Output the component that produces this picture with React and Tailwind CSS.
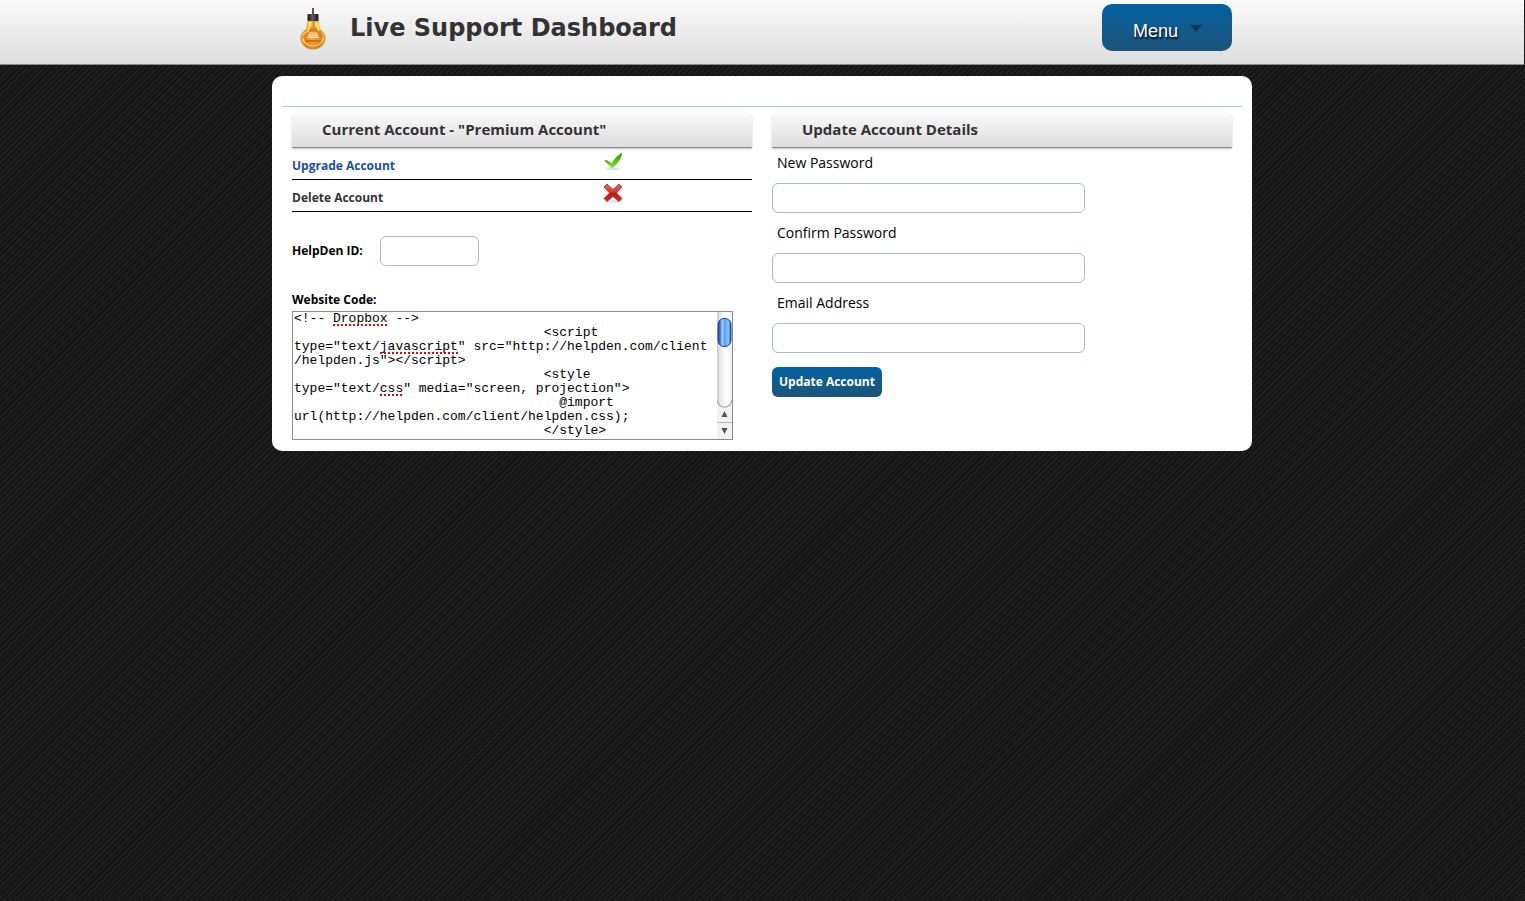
import React from 'react';

const code = [
  '<!-- Dropbox -->',
  ' '.repeat(32) + '<script',
  'type="text/javascript" src="http://helpden.com/client',
  '/helpden.js"></script>',
  ' '.repeat(32) + '<style',
  'type="text/css" media="screen, projection">',
  ' '.repeat(34) + '@import',
  'url(http://helpden.com/client/helpden.css);',
  ' '.repeat(32) + '</style>',
].join('\n');

function Bulb() {
  return (
    <svg width="32" height="48" viewBox="0 0 32 48" aria-hidden="true">
      <defs>
        <radialGradient id="glass" cx="50%" cy="66%" r="52%">
          <stop offset="0" stopColor="#f0a84a" />
          <stop offset="0.4" stopColor="#ea9430" />
          <stop offset="0.7" stopColor="#dd7f17" />
          <stop offset="1" stopColor="#f8cf6c" />
        </radialGradient>
        <linearGradient id="cap" x1="0" x2="1">
          <stop offset="0" stopColor="#191416" />
          <stop offset="0.45" stopColor="#66565a" />
          <stop offset="1" stopColor="#1c1618" />
        </linearGradient>
        <filter id="glow" x="-30%" y="-30%" width="160%" height="160%">
          <feGaussianBlur stdDeviation="1.2" />
        </filter>
        <filter id="soft" x="-20%" y="-20%" width="140%" height="140%">
          <feGaussianBlur stdDeviation="0.5" />
        </filter>
      </defs>
      <path d="M10 17h12l1 9c4 2 6 5 6 9 0 7-6 12-13 12S3 42 3 35c0-4 3-7 6-9z" fill="#f2d98c" opacity=".6" filter="url(#glow)" />
      <path d="M16 5v7" stroke="#5a5557" strokeWidth="2" />
      <path d="M11 18h10.500c0 4 0 7 1.500 9 3.500 2 5 4.500 5 8 0 6.500-5 11-12 11S4 41.500 4 35c0-3.500 2-6.500 5-8 1.500-2 2-5 2-9z" fill="url(#glass)" stroke="#a08a4c" strokeWidth=".8" />
      <g filter="url(#soft)">
        <path d="M12.500 18.500c0 5-1 8-2 9M20.500 18.500c0 5 .5 7 1.500 9" fill="none" stroke="#ffdd60" strokeWidth="2" />
        <path d="M6.500 32c1-3 3.500-3.500 5.500-4M26 35c-1 5-5 8-10 8S7 40 6 36" fill="none" stroke="#ffd060" strokeWidth="1.200" />
        <path d="M11.500 31h9.500v3H11z" fill="#f6c67c" />
        <path d="M10.500 34.500h11.500M12 30l8 0" fill="none" stroke="#ffedb4" strokeWidth="1.200" />
        <path d="M16.500 18v10" stroke="#d0852c" strokeWidth="2" />
        <path d="M8 38h16" stroke="#d07414" strokeWidth="2" />
      </g>
      <rect x="10.500" y="11" width="11" height="7" rx="1" fill="url(#cap)" />
    </svg>
  );
}

function Check() {
  return (
    <svg width="20" height="20" viewBox="0 0 20 20" aria-hidden="true">
      <defs>
        <linearGradient id="tick" x1="0" y1="0" x2="0" y2="1">
          <stop offset="0" stopColor="#3c9a12" />
          <stop offset="0.6" stopColor="#5cc40e" />
          <stop offset="1" stopColor="#a6e07c" />
        </linearGradient>
      </defs>
      <ellipse cx="10" cy="17" rx="7" ry="1" fill="#dcdcdc" />
      <path d="M1.200 8.800Q3 7.600 4.800 8.400L8.800 11.200Q12 5 18.500 1 19.500 1 19 2.200 18 8 10.500 15.500 9.200 17 8 15.500 4.500 12 1.200 8.800z" fill="url(#tick)" />
    </svg>
  );
}

function Cross() {
  return (
    <svg width="20" height="20" viewBox="0 0 20 20" aria-hidden="true">
      <defs>
        <linearGradient id="cross" x1="0" y1="0" x2="0" y2="1">
          <stop offset="0" stopColor="#e06a62" />
          <stop offset="0.45" stopColor="#cf3a34" />
          <stop offset="0.55" stopColor="#b31616" />
          <stop offset="1" stopColor="#dc2a24" />
        </linearGradient>
      </defs>
      <ellipse cx="10" cy="18.500" rx="8" ry="1" fill="#dedede" />
      <path d="M4 1l6 5.500L16 1l3 3-5.500 6 5.500 5.500-3 3-6-5-6 5-3-3L6.500 10 1 4z" fill="url(#cross)" stroke="#b02a26" strokeWidth=".8" strokeLinejoin="round" />
    </svg>
  );
}

function ScrollTrack() {
  return (
    <svg width="15" height="127" viewBox="0 0 15 127" aria-hidden="true" className="shrink-0">
      <defs>
        <linearGradient id="track" x1="0" x2="1">
          <stop offset="0" stopColor="#c9c9c9" />
          <stop offset="0.25" stopColor="#ececec" />
          <stop offset="0.7" stopColor="#ffffff" />
          <stop offset="1" stopColor="#ededed" />
        </linearGradient>
        <linearGradient id="thumb" x1="0" x2="1">
          <stop offset="0" stopColor="#1c3fae" />
          <stop offset="0.15" stopColor="#3b6fe0" />
          <stop offset="0.35" stopColor="#a9d2fa" />
          <stop offset="0.5" stopColor="#5b9cf0" />
          <stop offset="0.8" stopColor="#86c4fb" />
          <stop offset="1" stopColor="#2c4fa8" />
        </linearGradient>
      </defs>
      <rect width="15" height="127" fill="url(#track)" />
      <path d="M0 88c1 5 4 7 7.500 7s6.500-2 7.500-7v39H0z" fill="#f2f2f2" />
      <path d="M0 88c1 5 4 7 7.500 7s6.500-2 7.500-7" fill="none" stroke="#a8a8a8" strokeWidth="1.200" />
      <path d="M0 110.500h15" stroke="#b5b5b5" />
      <path d="M7.500 99l3 6h-6zM7.500 122l3-6h-6z" fill="#505050" />
      <rect x="1" y="6.500" width="13" height="28" rx="6" fill="url(#thumb)" stroke="#24408f" />
    </svg>
  );
}

function SpellingMarks() {
  return (
    <svg width="200" height="84" viewBox="0 0 200 84" aria-hidden="true" className="pointer-events-none absolute top-0 left-0">
      <path d="M40 13h55M87 41h78M87 83h23" stroke="#f00000" strokeWidth="2" strokeDasharray="2 2" />
    </svg>
  );
}

function PanelHeading({ children }) {
  return (
    <h2 className="mb-px h-9 rounded-t-md border-b border-[#8c8c8c] bg-linear-to-b from-[#fafafa] to-[#dedede] pl-[30px] text-[15px] leading-[34px] font-bold text-[#333] shadow-[0_1px_2px_rgba(0,0,0,0.25)]">
      {children}
    </h2>
  );
}

function Field({ id, label, type }) {
  return (
    <div className="mb-3 flex flex-col items-start">
      <label htmlFor={id} className="mb-3 pl-[5px] text-sm leading-4">{label}</label>
      <input id={id} type={type} className="h-[30px] w-[313px] max-w-full rounded-md border border-[#a9b8cf] px-2" />
    </div>
  );
}

export default function App() {
  return (
    <div className="min-h-screen bg-[#191919] bg-[repeating-linear-gradient(135deg,#151515_0px,#151515_2px,#202020_3px,#202020_4px)] pr-px pb-10 font-['Open_Sans',sans-serif] text-black">
      <header className="h-[65px] border-b border-[#8c8c8c] bg-linear-to-b from-[#fafafa] to-[#dedede]">
        <div className="mx-auto flex max-w-[980px] items-start justify-between pr-5 pl-[25px]">
          <div className="flex items-start">
            <div className="pt-[3px]"><Bulb /></div>
            <h1 className="pt-3 pl-[21px] font-['DejaVu_Sans',sans-serif] text-2xl leading-8 font-bold text-[#333]">Live Support Dashboard</h1>
          </div>
          <button type="button" className="mt-1 flex h-[47px] w-[130px] items-center rounded-[10px] bg-linear-to-b from-[#0061a3] to-[#1a5579] pt-[6px] pl-[31px] font-['Liberation_Sans',sans-serif] text-lg leading-6 text-white [text-shadow:1px_2px_2px_#000]">
            Menu
            <svg width="12" height="7" viewBox="0 0 12 7" aria-hidden="true" className="mb-1 ml-3"><path d="M0 0h12L6 7z" fill="#0b3553" /></svg>
          </button>
        </div>
      </header>
      <main className="mx-auto mt-[11px] max-w-[980px] rounded-[10px] bg-white px-[10px] pt-[30px] pb-[11px]">
        <div className="grid grid-cols-2 gap-5 border-t border-[#a3c8f0] px-[10px] pt-[5px]">
          <section>
            <PanelHeading>Current Account - "Premium Account"</PanelHeading>
            <div className="grid h-[31px] grid-cols-[311px_1fr] border-b border-black">
              <a href="#upgrade" className="pt-[9px] text-xs leading-4 font-bold text-[#1a4fa3]">Upgrade Account</a>
              <div className="pt-[3px]"><Check /></div>
            </div>
            <div className="grid h-8 grid-cols-[311px_1fr] border-b border-black">
              <a href="#delete" className="pt-[10px] text-xs leading-4 font-bold text-[#333]">Delete Account</a>
              <div className="pt-[3px]"><Cross /></div>
            </div>
            <div className="mt-6 flex items-center">
              <label htmlFor="helpden-id" className="w-[88px] text-xs leading-4 font-bold">HelpDen ID:</label>
              <input id="helpden-id" type="text" className="h-[30px] w-[99px] rounded-md border border-[#a9b8cf] px-2" />
            </div>
            <label htmlFor="website-code" className="mt-[26px] mb-[3px] block text-xs leading-4 font-bold">Website Code:</label>
            <div className="relative flex w-[441px] max-w-full border border-[#8c8c8c]">
              <textarea id="website-code" wrap="off" spellCheck={false} defaultValue={code} className="h-[127px] min-w-0 flex-1 resize-none overflow-hidden pl-px font-['Liberation_Mono',monospace] text-[13px] leading-[14px] outline-none" />
              <SpellingMarks />
              <ScrollTrack />
            </div>
          </section>
          <section>
            <PanelHeading>Update Account Details</PanelHeading>
            <form className="pt-[6px]">
              <Field id="new-password" label="New Password" type="password" />
              <Field id="confirm-password" label="Confirm Password" type="password" />
              <Field id="email" label="Email Address" type="email" />
              <button type="button" className="mt-[2px] h-[30px] rounded-md bg-linear-to-b from-[#0061a3] to-[#1a5579] px-[7px] text-xs leading-4 font-bold text-white">Update Account</button>
            </form>
          </section>
        </div>
      </main>
    </div>
  );
}
